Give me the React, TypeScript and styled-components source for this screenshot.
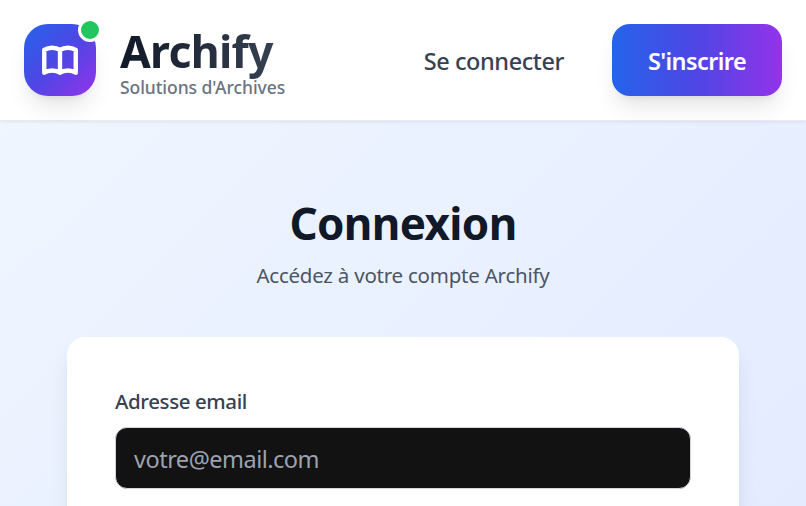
import React from 'react';
import styled, { createGlobalStyle } from 'styled-components';

const Global = createGlobalStyle`
  *, *::before, *::after { box-sizing: border-box; }
  body { margin: 0; font-family: "Segoe UI", "Noto Sans", sans-serif; }
`;

const Page = styled.div`
  height: 100vh;
  overflow: hidden;
  display: flex;
  flex-direction: column;
  background: linear-gradient(135deg, #eff6ff, #e0e7ff) 0 121px / 100% 800px no-repeat;
`;

const Header = styled.header`
  position: relative;
  flex: none;
  height: 121px;
  padding: 0 24px;
  display: flex;
  align-items: center;
  justify-content: space-between;
  background: #fff;
  border-bottom: 1px solid #e9ebf0;
  box-shadow: 0 1.5px 3px rgba(0, 0, 0, 0.06);
`;

const Brand = styled.div`
  display: flex;
  align-items: center;
  gap: 24px;
`;

const Logo = styled.div`
  position: relative;
  width: 72px;
  height: 72px;
  display: grid;
  place-items: center;
  border-radius: 24px;
  background: linear-gradient(135deg, #2563eb, #4f46e5, #9333ea);
  box-shadow: 0 15px 22.5px -4.5px rgba(0, 0, 0, 0.1), 0 6px 9px -6px rgba(0, 0, 0, 0.1);
`;

const Status = styled.span`
  position: absolute;
  top: -6px;
  right: -6px;
  width: 24px;
  height: 24px;
  border: 3px solid #fff;
  border-radius: 50%;
  background: #22c55e;
`;

const BrandText = styled.div`
  display: flex;
  flex-direction: column;
`;

const BrandName = styled.span`
  align-self: flex-start;
  margin-top: -3px;
  padding-right: 3px;
  font-size: 44.5px;
  font-weight: 700;
  line-height: 58px;
  letter-spacing: -0.7px;
  color: transparent;
  background: linear-gradient(90deg, #111827, #374151);
  background-clip: text;
  -webkit-background-clip: text;
`;

const Tagline = styled.span`
  margin-top: -2px;
  font-size: 17.5px;
  font-weight: 500;
  line-height: 18px;
  letter-spacing: -0.07px;
  color: #6b7280;
`;

const Nav = styled.nav`
  display: flex;
  align-items: center;
  gap: 48px;
`;

const NavLink = styled.a`
  padding-top: 2px;
  font-size: 23.5px;
  font-weight: 500;
  line-height: 36px;
  letter-spacing: -0.42px;
  color: #374151;
`;

const SignUp = styled.button`
  width: 170px;
  height: 72px;
  padding: 2px 0 0;
  border: 0;
  border-radius: 18px;
  font: 600 23.5px/36px "Segoe UI", "Noto Sans", sans-serif;
  letter-spacing: -0.6px;
  color: #fff;
  background: linear-gradient(90deg, #2563eb, #4f46e5, #9333ea);
  box-shadow: 0 15px 22.5px -4.5px rgba(0, 0, 0, 0.1), 0 6px 9px -6px rgba(0, 0, 0, 0.1);
`;

const Main = styled.main`
  flex: none;
  width: 672px;
  margin: 0 auto;
  padding-top: 75px;
  text-align: center;
`;

const Title = styled.h1`
  margin: 0;
  font-size: 44px;
  font-weight: 700;
  line-height: 54px;
  letter-spacing: -0.65px;
  color: #111827;
`;

const Subtitle = styled.p`
  margin: 10px 0 0;
  font-size: 20.5px;
  line-height: 30px;
  letter-spacing: -0.23px;
  color: #4b5563;
`;

const Card = styled.section`
  height: 420px;
  margin-top: 47px;
  padding: 48px;
  border-radius: 18px;
  text-align: left;
  background: #fff;
  box-shadow: 0 15px 22.5px -4.5px rgba(0, 0, 0, 0.1), 0 6px 9px -6px rgba(0, 0, 0, 0.1);
`;

const Label = styled.label`
  display: block;
  font-size: 20.5px;
  font-weight: 500;
  line-height: 33px;
  letter-spacing: -0.4px;
  color: #374151;
`;

const Input = styled.input`
  display: block;
  width: 576px;
  height: 62px;
  margin-top: 9px;
  padding: 2px 18px 0;
  border: 1px solid #d1d5db;
  border-radius: 12px;
  outline: none;
  font: 400 23.5px/36px "Segoe UI", "Noto Sans", sans-serif;
  letter-spacing: -0.5px;
  color: #fff;
  background: #121212;
  &::placeholder { color: #9ca3af; opacity: 1; }
`;

const BookIcon = () => (
  <svg width="42" height="42" viewBox="0 0 24 24" fill="none" stroke="#fff" strokeWidth="2.5" strokeLinecap="round" strokeLinejoin="round">
    <path d="M12 6.253v13m0-13C10.832 5.477 9.246 5 7.5 5S4.168 5.477 3 6.253v13C4.168 18.477 5.754 18 7.5 18s3.332.477 4.5 1.253m0-13C13.168 5.477 14.754 5 16.5 5c1.747 0 3.332.477 4.5 1.253v13C19.832 18.477 18.247 18 16.5 18c-1.746 0-3.332.477-4.5 1.253" />
  </svg>
);

export default function App() {
  return (
    <Page>
      <Global />
      <Header>
        <Brand>
          <Logo>
            <BookIcon />
            <Status />
          </Logo>
          <BrandText>
            <BrandName>Archify</BrandName>
            <Tagline>Solutions d'Archives</Tagline>
          </BrandText>
        </Brand>
        <Nav>
          <NavLink>Se connecter</NavLink>
          <SignUp>S'inscrire</SignUp>
        </Nav>
      </Header>
      <Main>
        <Title>Connexion</Title>
        <Subtitle>Accédez à votre compte Archify</Subtitle>
        <Card>
          <Label htmlFor="email">Adresse email</Label>
          <Input id="email" type="email" placeholder="votre@email.com" />
        </Card>
      </Main>
    </Page>
  );
}
